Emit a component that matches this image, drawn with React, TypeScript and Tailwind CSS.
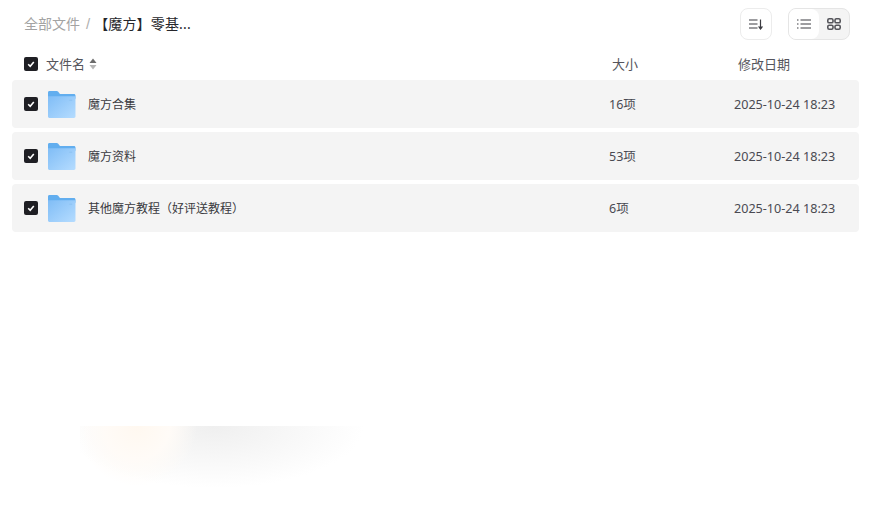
const FILES = [
  { name: "魔方合集", size: "16项", date: "2025-10-24 18:23" },
  { name: "魔方资料", size: "53项", date: "2025-10-24 18:23" },
  { name: "其他魔方教程（好评送教程）", size: "6项", date: "2025-10-24 18:23" },
];

const Check = () => (
  <span className="flex h-[14px] w-[14px] shrink-0 items-center justify-center rounded-[2px] bg-[#1f1f24]">
    <svg width="10" height="10" viewBox="0 0 10 10" fill="none">
      <path d="M2.2 5.2 4.2 7.2 7.8 3" stroke="#fff" strokeWidth="1.6" />
    </svg>
  </span>
);

const Folder = () => (
  <svg width="29" height="27" viewBox="0 0 30 28" className="block shrink-0">
    <defs>
      <linearGradient id="folderFront" x1="0" y1="0" x2="1" y2="1">
        <stop offset="0" stopColor="#80bdf6" />
        <stop offset="1" stopColor="#b5dcff" />
      </linearGradient>
    </defs>
    <path d="M1 1.500C1 .7 1.600 0 2.400 0H10c.6 0 1 .2 1.400.6L13.400 3H28c.8 0 1.500.7 1.500 1.500V8H1Z" fill="#62aeef" />
    <path d="M1 5.500H29.500V26.500c0 .8-.7 1.500-1.500 1.500H2.400C1.600 28 1 27.300 1 26.500Z" fill="url(#folderFront)" />
    <rect x="23" y="9" width="3" height="1.200" fill="#8fc4f3" />
  </svg>
);

export default function App() {
  return (
    <div className="h-[514px] w-[874px] overflow-hidden bg-white font-['Noto_Sans','Noto_Sans_CJK_SC',sans-serif] text-[12px] text-[#4a4a52]">
      <div className="flex h-[48px] items-center justify-between px-[24px]">
        <div className="mb-[2px] flex items-center text-[14px]">
          <span className="text-[#a3a3a3]">全部文件</span>
          <span className="ml-[6px] mt-[2px] font-['Liberation_Sans'] text-[15px] font-light text-[#b0b0b0]">/</span>
          <span className="ml-[4px] tracking-[0.15px] text-[#26262b]">【魔方】零基...</span>
        </div>
        <div className="flex items-center gap-[16px]">
          <button className="flex h-[32px] w-[32px] items-center justify-center rounded-[8px] border border-[#ececec] bg-white">
            <svg width="14" height="12" viewBox="0 0 14 12" fill="none" stroke="#3c3c42" strokeWidth="1.200">
              <path d="M0 2H8.500M0 6H8.500M0 10H8.500" />
              <path d="M11.500 1.500V11" />
              <path d="M10 9 11.500 11 13 9Z" fill="#3c3c42" />
            </svg>
          </button>
          <div className="flex h-[32px] w-[62px] overflow-hidden rounded-[8px] border border-[#e5e5e5] bg-[#f4f4f4]">
            <div className="flex w-[30px] items-center justify-center rounded-r-[8px] bg-white">
              <svg width="14" height="12" viewBox="0 0 14 12" fill="none" stroke="#3c3c42" strokeWidth="1.200">
                <path d="M3.500 2H14M3.500 6H14M3.500 10H14M0 2H1.500M0 6H1.500M0 10H1.500" />
              </svg>
            </div>
            <div className="flex flex-1 items-center justify-center">
              <svg width="14" height="12" viewBox="0 0 14 12" fill="none" stroke="#55555b" strokeWidth="1.600">
                <rect x="0.800" y="0.800" width="5.200" height="4" rx="1.400" />
                <rect x="8" y="0.800" width="5.200" height="4" rx="1.400" />
                <rect x="0.800" y="7.200" width="5.200" height="4" rx="1.400" />
                <rect x="8" y="7.200" width="5.200" height="4" rx="1.400" />
              </svg>
            </div>
          </div>
        </div>
      </div>

      <div className="flex h-[32px] items-center text-[13px] text-[#55555c]">
        <div className="flex w-[612px] items-center pl-[24px]">
          <Check />
          <span className="ml-[8px] mt-[1px]">文件名</span>
          <svg width="8" height="12" viewBox="0 0 8 12" className="ml-[4px]">
            <path d="M4 .5 7.500 5H.5Z" fill="#6b6b6b" />
            <path d="M4 11.500 7.500 7H.5Z" fill="#b5b5b5" />
          </svg>
        </div>
        <span className="mt-[1px] w-[126px]">大小</span>
        <span className="mt-[1px]">修改日期</span>
      </div>

      <div className="flex flex-col gap-[4px] pl-[12px] pr-[15px]">
        {FILES.map((file) => (
          <div key={file.name} className="flex h-[48px] items-center rounded-[4px] bg-[#f4f4f4] pl-[12px]">
            <Check />
            <span className="ml-[9px] mt-[1px]"><Folder /></span>
            <span className="ml-[12px] mt-[2px] w-[521px] text-[#3a3a40]">{file.name}</span>
            <span className="mt-[2px] w-[125px] text-[12.5px]">{file.size}</span>
            <span className="mt-[2px] text-[12.6px]">{file.date}</span>
          </div>
        ))}
      </div>

      <div className="ml-[80px] mt-[194px] h-[70px] w-[285px] bg-[radial-gradient(ellipse_60px_60px_at_20%_0%,#fff8f0,#fffbf7_55%,transparent_100%),radial-gradient(ellipse_150px_62px_at_47%_0%,#efefef,#f7f7f7_50%,#ffffff_100%)]" />
    </div>
  );
}
